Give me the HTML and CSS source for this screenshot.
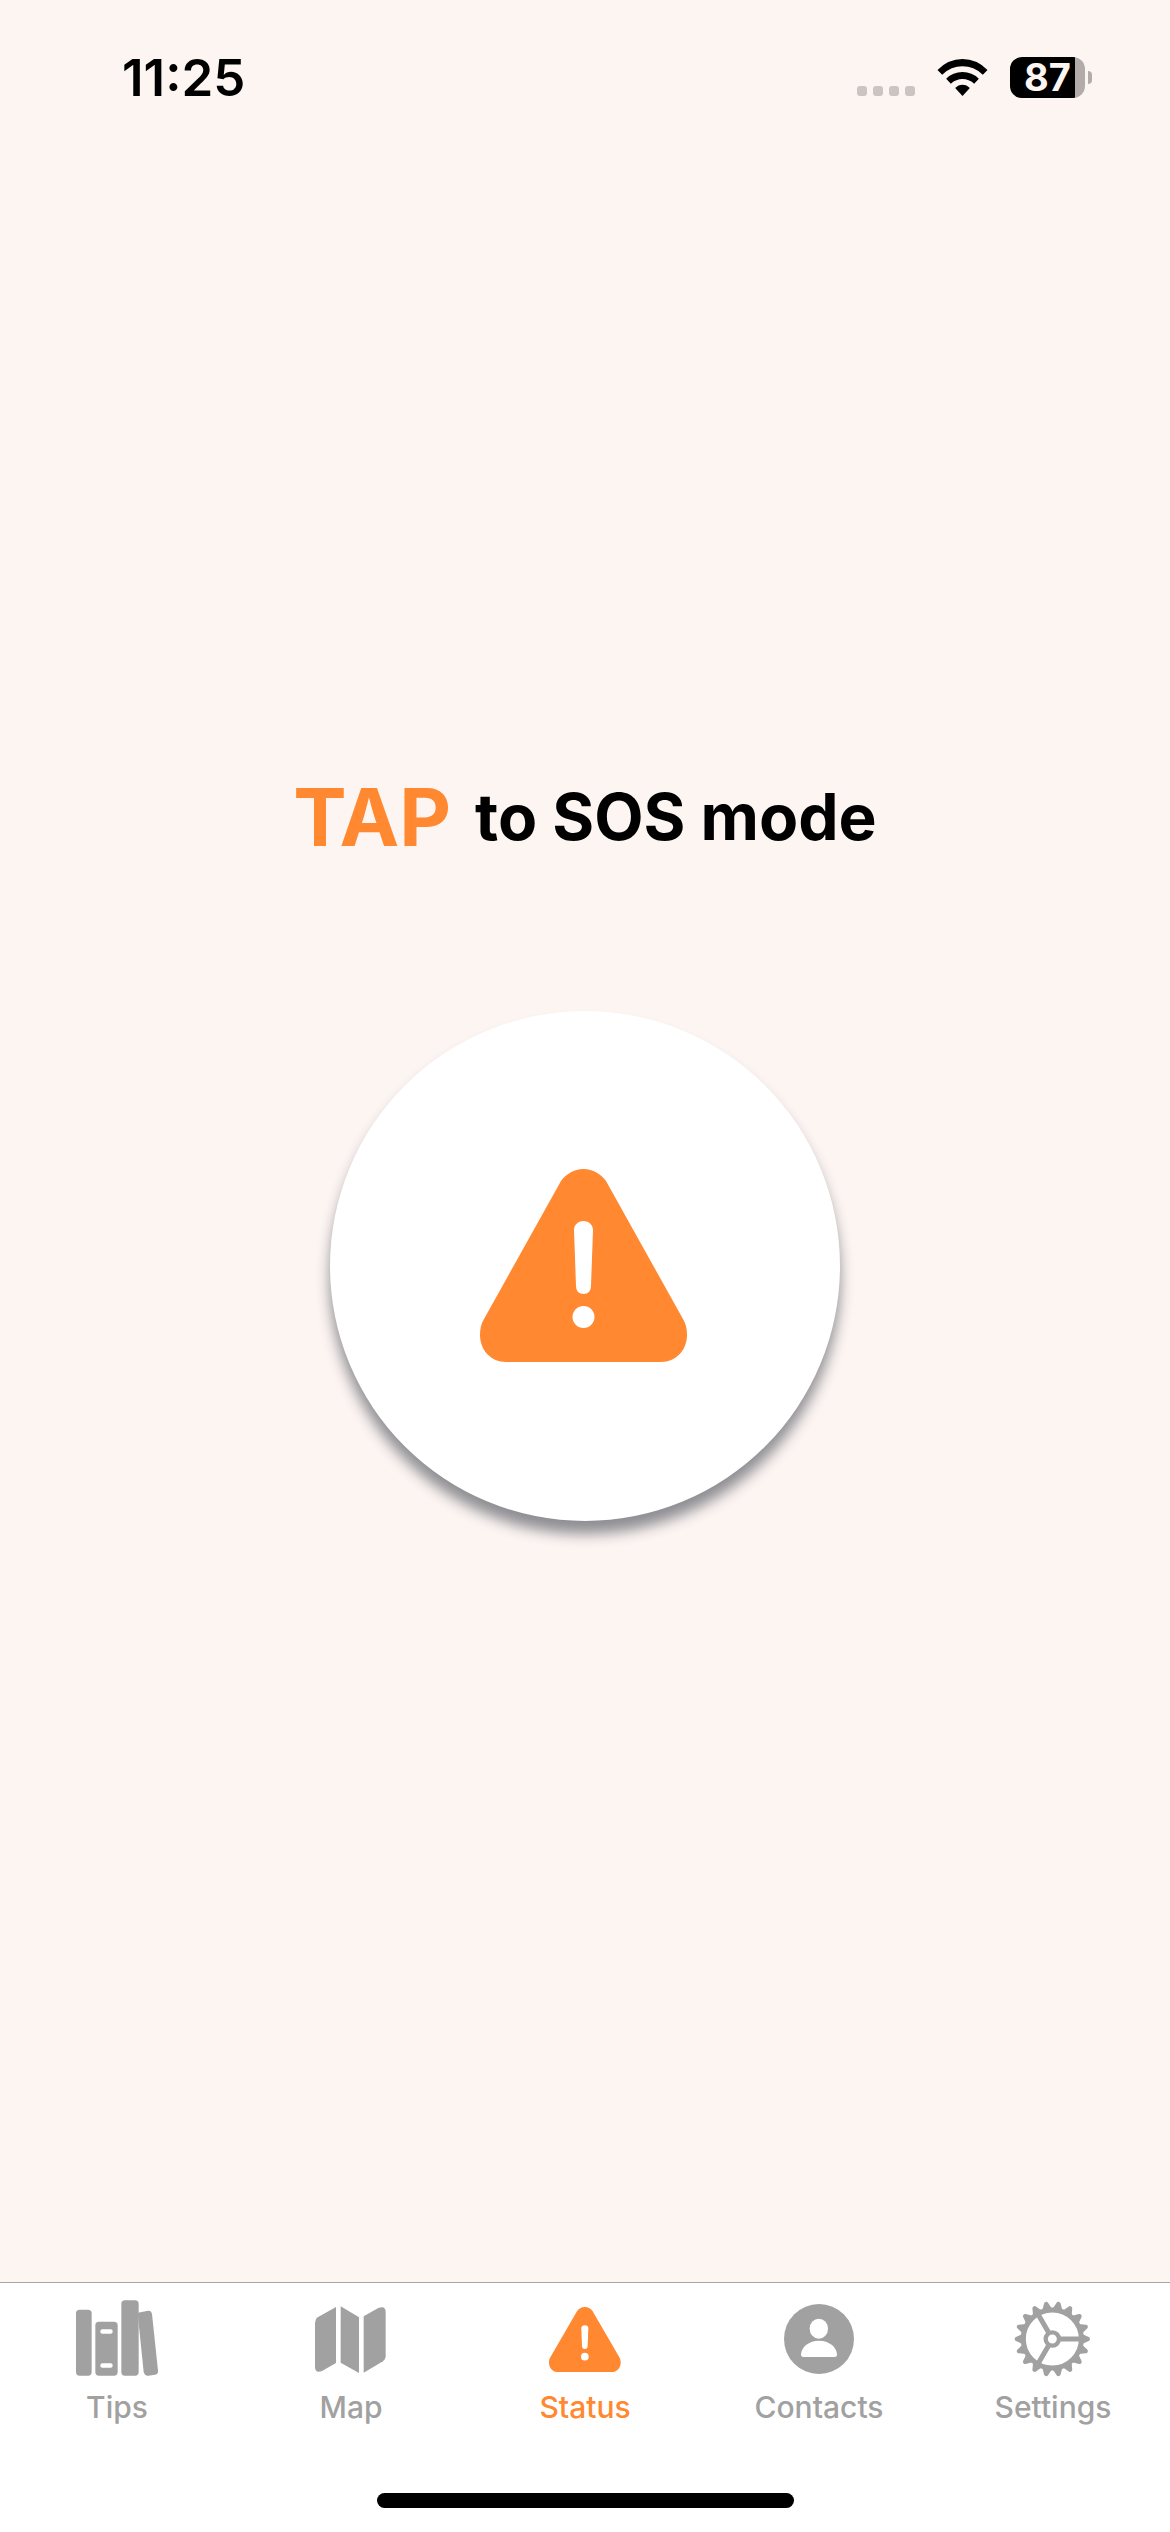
FILE: index.html
```html
<!DOCTYPE html>
<html lang="en">
<head>
<meta charset="utf-8">
<meta name="viewport" content="width=device-width, initial-scale=1">
<title>Status</title>
<link rel="stylesheet" href="styles.css">
</head>
<body>
<header class="status-bar">
  <time class="clock">11:25</time>
  <div class="indicators">
    <div class="signal"><i></i><i></i><i></i><i></i></div>
    <svg class="wifi" viewBox="0 0 150 111" aria-hidden="true">
      <path d="M0 33Q32 0 75 0T150 33L136 47Q109 22 75 22T14 47Z"/>
      <path d="M26 59Q46 39 75 39T124 59L110 74Q94 60 75 60T40 74Z"/>
      <path d="M53 87Q62 77 75 77T97 87L75 111Z"/>
    </svg>
    <div class="battery"><span class="battery-level">87</span><i class="battery-tip"></i></div>
  </div>
</header>

<main class="sos">
  <h1 class="prompt"><span class="prompt-action">TAP</span><span class="prompt-text">to SOS mode</span></h1>
  <button class="sos-button" type="button" aria-label="Start SOS mode">
    <svg class="sos-icon" viewBox="0 0 210 193" aria-hidden="true">
      <path class="accent" d="M81 12C86 5 94 0 103.500 0S121 5 126 12L203 150C206 155 207 160 207 166C207 181 196 193 181 193H26C11 193 0 181 0 166C0 160 1 155 4 150Z"/>
      <path class="cutout" d="M94 61C94 56 98 52 103.500 52S113 56 113 61L111 117C111 122 108 125 103.500 125S96 122 96 117Z"/>
      <circle class="cutout" cx="103.500" cy="148" r="11"/>
    </svg>
  </button>
</main>

<footer class="tab-bar">
  <nav class="tabs">
    <a class="tab" href="#tips">
      <svg class="tab-icon" viewBox="36 72 270 270" aria-hidden="true">
        <rect x="48" y="119" width="47" height="198" rx="11"/>
        <rect x="106" y="155" width="67" height="162" rx="11"/>
        <rect x="184" y="91" width="52" height="226" rx="11"/>
        <path d="M234 128L264 122Q274 121 276 132L294 302Q295 312 285 314L265 317Q254 318 251 306L236 160Z"/>
        <rect class="cutout" x="121" y="178" width="37" height="13" rx="6"/>
        <rect class="cutout" x="121" y="280" width="37" height="13" rx="6"/>
      </svg>
      <span>Tips</span>
    </a>
    <a class="tab" href="#map">
      <svg class="tab-icon" viewBox="48 72 270 270" aria-hidden="true">
        <path d="M138 111V279L96 303Q75 311 75 290V158Q75 147 83 142Z"/>
        <path d="M152 109L207 142V309L152 278Z"/>
        <path d="M221 139L265 114Q287 106 287 126V259Q287 269 279 274L221 308Z"/>
      </svg>
      <span>Map</span>
    </a>
    <a class="tab tab-active" href="#status" aria-current="page">
      <svg class="tab-icon" viewBox="60 72 270 270" aria-hidden="true">
        <path d="M171 124C176 116 184 111 194.500 111S213 116 218 124L298 262C301 267 302 272 302 278C302 294 290 306 275 306H114C99 306 87 294 87 278C87 272 88 267 91 262Z"/>
        <path class="cutout" d="M184 175C184 169 188 166 194.500 166S205 169 205 175L203 229C203 234 200 237 194.500 237S186 234 186 229Z"/>
        <circle class="cutout" cx="194.500" cy="260" r="11.500"/>
      </svg>
      <span>Status</span>
    </a>
    <a class="tab" href="#contacts">
      <svg class="tab-icon" viewBox="102 72 270 270" aria-hidden="true">
        <circle cx="237" cy="207" r="105"/>
        <ellipse class="cutout" cx="236.500" cy="176" rx="27.500" ry="30"/>
        <path class="cutout" d="M190 261Q183 261 183 253C184 231 207 212 237 212S290 231 291 253Q291 261 284 261Z"/>
      </svg>
      <span>Contacts</span>
    </a>
    <a class="tab" href="#settings">
      <svg class="tab-icon" viewBox="-133 -135 270 270" aria-hidden="true">
        <defs>
          <path id="tooth" d="M86 -18L96 -12L109 -6Q113 -5 113 0T109 6L96 12L86 18Z"/>
          <g id="teeth"><use href="#tooth"/><use href="#tooth" transform="rotate(20)"/><use href="#tooth" transform="rotate(40)"/></g>
        </defs>
        <use href="#teeth"/>
        <use href="#teeth" transform="rotate(60)"/>
        <use href="#teeth" transform="rotate(120)"/>
        <use href="#teeth" transform="rotate(180)"/>
        <use href="#teeth" transform="rotate(240)"/>
        <use href="#teeth" transform="rotate(300)"/>
        <g class="gear-lines">
          <circle r="87"/>
          <circle class="gear-hub" r="20"/>
          <path d="M24 0H84M-12 21L-42 73M-12 -21L-42 -73"/>
        </g>
      </svg>
      <span>Settings</span>
    </a>
  </nav>
  <div class="home-indicator"></div>
</footer>
</body>
</html>
```
FILE: styles.css
```css
:root {
  --page: #fdf5f2;
  --accent: #ff8830;
  --muted: #a1a1a1;
}

* {
  box-sizing: border-box;
}

body {
  margin: 0;
  min-height: 100vh;
  display: flex;
  flex-direction: column;
  background: var(--page);
  color: #000;
  font-family: Inter, "Liberation Sans", sans-serif;
}

.status-bar {
  height: 141px;
  padding: 14px 78px 0 122px;
  display: flex;
  align-items: center;
  justify-content: space-between;
}

.clock {
  font-size: 51px;
  line-height: 60px;
  font-weight: 600;
}

.indicators {
  display: flex;
  align-items: center;
  gap: 22px;
}

.signal {
  display: flex;
  align-self: flex-end;
  gap: 6px;
  padding-bottom: 2px;
}

.signal i {
  width: 10px;
  height: 10px;
  border-radius: 3px;
  background: #cbc4c2;
}

.wifi {
  width: 51px;
  height: 37px;
}

.battery {
  display: flex;
  align-items: center;
  gap: 3px;
}

.battery-level {
  width: 75px;
  height: 41px;
  border-radius: 12px;
  background: linear-gradient(to right, #000 65px, #b2abaa 65px);
  color: var(--page);
  font-size: 38px;
  line-height: 41px;
  font-weight: 700;
  text-align: center;
}

.battery-tip {
  width: 4px;
  height: 13px;
  border-radius: 0 4px 4px 0;
  background: #b2abaa;
}

.sos {
  flex: 1;
  display: flex;
  flex-direction: column;
  align-items: center;
  justify-content: center;
  gap: 144px;
  padding-bottom: 136px;
}

.prompt {
  margin: 0;
  display: flex;
  align-items: center;
  gap: 24px;
  line-height: 100px;
  font-weight: 700;
}

.prompt-action {
  color: var(--accent);
  font-size: 80px;
}

.prompt-text {
  font-size: 64px;
}

.sos-button {
  width: 510px;
  height: 510px;
  padding: 0;
  border: 0;
  border-radius: 50%;
  display: flex;
  align-items: center;
  justify-content: center;
  background: #fff;
  box-shadow: 0 13px 14px #8e8e93;
  cursor: pointer;
}

.sos-icon {
  width: 210px;
  height: 193px;
}

.accent {
  fill: var(--accent);
}

.cutout {
  fill: #fff;
}

.tab-bar {
  padding: 11px 0 24px;
  border-top: 1px solid #aba5a4;
  background: #fff;
}

.tabs {
  display: grid;
  grid-template-columns: repeat(5, 1fr);
}

.tab {
  display: flex;
  flex-direction: column;
  align-items: center;
  gap: 5px;
  color: var(--muted);
  font-size: 30px;
  line-height: 36px;
  font-weight: 500;
  text-decoration: none;
}

.tab-active {
  color: var(--accent);
}

.tab-icon {
  width: 90px;
  height: 90px;
  fill: currentColor;
}

.gear-lines {
  fill: none;
  stroke: currentColor;
  stroke-width: 15px;
}

.gear-hub {
  stroke-width: 13px;
}

.home-indicator {
  width: 417px;
  height: 15px;
  margin: 68px auto 0;
  border-radius: 8px;
  background: #000;
}
```
